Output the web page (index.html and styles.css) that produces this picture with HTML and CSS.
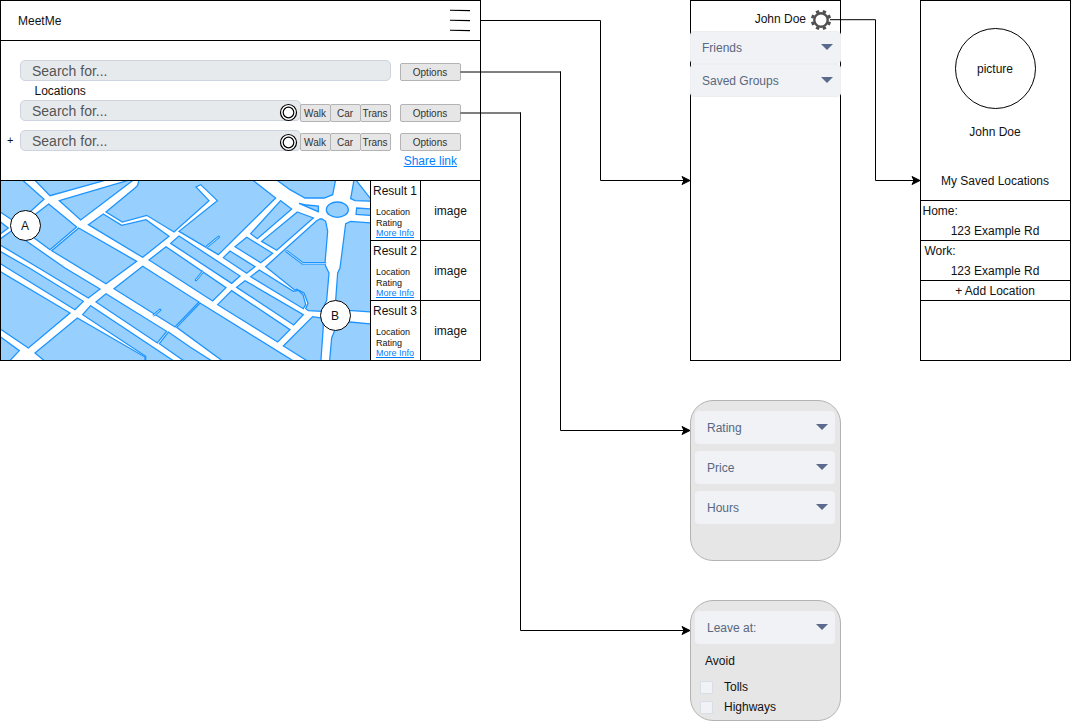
FILE: index.html
```html
<!DOCTYPE html>
<html lang="en">
<head>
<meta charset="utf-8">
<title>MeetMe</title>
<link rel="stylesheet" href="styles.css">
</head>
<body>
<main class="canvas">
  <section class="frame home">
    <header class="home-header">
      <span>MeetMe</span>
      <svg class="burger" width="22" height="24" viewBox="0 0 22 24"><path d="M1 1.3L21 1.6M1 11.3L21 11.6M1 21.3L21 21.6"/></svg>
    </header>
    <div class="form">
      <div class="row">
        <div class="search wide">Search for...</div>
        <div class="btn options">Options</div>
      </div>
      <div class="label">Locations</div>
      <div class="row tall">
        <div class="search">Search for...</div>
        <svg class="target" width="20" height="20" viewBox="0 0 20 20"><circle cx="9.5" cy="9.5" r="8"/><circle cx="9.5" cy="9.5" r="5.3"/></svg>
        <div class="modes"><div class="btn">Walk</div><div class="btn">Car</div><div class="btn">Trans</div></div>
        <div class="btn options">Options</div>
      </div>
      <div class="row last">
        <span class="plus">+</span>
        <div class="search">Search for...</div>
        <svg class="target" width="20" height="20" viewBox="0 0 20 20"><circle cx="9.5" cy="10.5" r="8"/><circle cx="9.5" cy="10.5" r="5.3"/></svg>
        <div class="modes"><div class="btn">Walk</div><div class="btn">Car</div><div class="btn">Trans</div></div>
        <div class="btn options">Options</div>
      </div>
      <div class="share"><a class="link">Share link</a></div>
    </div>
    <div class="lower">
      <svg class="map" width="369" height="179" viewBox="3 9 1107 537">
        <g class="blocks">
          <path d="M-5 -5H55L132 64L92 100L50 135L-5 98Z"/>
          <path d="M-5 127L25 150L-5 172Z"/>
          <path d="M98 0L150 53L340 0Z"/>
          <path d="M178 68L408 0L242 126Z"/>
          <path d="M146 78L230 147L150 215L100 178L85 125Z"/>
          <path d="M236 150L410 250L318 317L155 218Z"/>
          <path d="M-5 187L35 158L80 190L195 270L300 333L265 360L120 272L-5 198Z"/>
          <path d="M-5 217L88 270L250 370L225 395L22 270L-5 253Z"/>
          <path d="M-5 277L210 405L85 510L-5 449Z"/>
          <path d="M-5 472L58 518L20 558L-5 558Z"/>
          <path d="M105 525L232 420L435 537V558H145Z"/>
          <path d="M272 383L535 558H437V535L248 410Z"/>
          <path d="M318 347L500 460L472 495L288 372Z"/>
          <path d="M505 462L570 507L650 558H565L478 497Z"/>
          <path d="M428 265L597 372L525 447L342 332Z"/>
          <path d="M600 375L895 558H680L530 448Z"/>
          <path d="M265 140L310 108L365 142L438 125L507 175L428 238Z"/>
          <path d="M318 102L367 132L440 112L522 162L627 68L588 27L602 20L652 68L537 160L655 230L827 60L750 0H418L413 22L405 30Z"/>
          <path d="M537 174L720 294L695 316L512 196Z"/>
          <path d="M498 206L678 329L638 369L447 246Z"/>
          <path d="M653 380L695 338L870 455L833 492Z"/>
          <path d="M710 328L735 308L910 410L881 441Z"/>
          <path d="M752 296L778 276L880 340L895 337L909 350L917 380L910 392Z"/>
          <path d="M670 239L690 219L765 266L740 286Z"/>
          <path d="M705 206L740 178L818 226L782 254Z"/>
          <path d="M842 68L875 93L772 182L752 167Z"/>
          <path d="M892 102L940 120L830 217L785 190Z"/>
          <path d="M960 123L966 123L977 130L983 160L975 255L977 264L987 285L980 367L965 400L925 398L917 392L924 376L912 345L890 334L885 337L797 266L950 128Z"/>
          <path d="M1118 135L1052 130L1037 137L1020 270L1013 285L1007 367L1045 397L1118 402Z"/>
          <path d="M1063 0L1052 62L1065 68L1118 70Z"/>
          <path d="M822 0L870 35L915 60H973L998 50L1008 0Z"/>
          <ellipse cx="1012" cy="95" rx="33" ry="23"/>
          <path d="M897 76L920 81L955 84V101Z"/>
          <path d="M1070 90L1118 93V113L1068 109Z"/>
          <path d="M850 504L938 416L965 420L970 445L962 558H937Z"/>
          <path d="M1118 438L1050 432L1005 455L995 480L988 558H1118Z"/>
        </g>
        <path class="lane-edge" d="M622 205L656 177M608 282L588 306M462 411L480 396"/>
        <path class="lane-core" d="M620 207L655 178M610 280L589 305M460 413L479 397"/>
        <path class="lane-edge" d="M860 220L908 256H975"/>
        <path class="lane-core" d="M858 218L909 257H977"/>
      </svg>
      <div class="results">
        <div class="result"><div class="info"><b>Result 1</b><span>Location</span><span>Rating</span><a class="link">More Info</a></div><div class="thumb">image</div></div>
        <div class="result"><div class="info"><b>Result 2</b><span>Location</span><span>Rating</span><a class="link">More Info</a></div><div class="thumb">image</div></div>
        <div class="result"><div class="info"><b>Result 3</b><span>Location</span><span>Rating</span><a class="link">More Info</a></div><div class="thumb">image</div></div>
      </div>
    </div>
    <div class="pin pin-a">A</div>
    <div class="pin pin-b">B</div>
  </section>

  <section class="frame menu">
    <div class="user"><span>John Doe</span>
      <svg width="22" height="22" viewBox="-11 -11 22 22"><circle class="gear-ring" r="6.7"/><g class="gear-teeth"><path d="M7.4 0H10.2" transform="rotate(22.5)"/><path d="M7.4 0H10.2" transform="rotate(67.5)"/><path d="M7.4 0H10.2" transform="rotate(112.5)"/><path d="M7.4 0H10.2" transform="rotate(157.5)"/><path d="M7.4 0H10.2" transform="rotate(202.5)"/><path d="M7.4 0H10.2" transform="rotate(247.5)"/><path d="M7.4 0H10.2" transform="rotate(292.5)"/><path d="M7.4 0H10.2" transform="rotate(337.5)"/></g></svg>
    </div>
    <div class="drop">Friends<i class="caret"></i></div>
    <div class="drop">Saved Groups<i class="caret"></i></div>
  </section>

  <section class="frame profile">
    <div class="avatar">picture</div>
    <div class="name">John Doe</div>
    <div class="saved">My Saved Locations</div>
    <div class="place"><span>Home:</span><p>123 Example Rd</p></div>
    <div class="place work"><span>Work:</span><p>123 Example Rd</p></div>
    <div class="add">+ Add Location</div>
  </section>

  <section class="card filters">
    <div class="drop">Rating<i class="caret"></i></div>
    <div class="drop">Price<i class="caret"></i></div>
    <div class="drop">Hours<i class="caret"></i></div>
  </section>

  <section class="card travel">
    <div class="drop">Leave at:<i class="caret"></i></div>
    <div class="avoid">Avoid</div>
    <div class="check"><i class="box"></i>Tolls</div>
    <div class="check"><i class="box"></i>Highways</div>
  </section>

  <svg class="wires" width="1071" height="721" viewBox="0 0 1071 721">
    <path d="M480.5 20.5H600.5V180.5H684"/>
    <path d="M560.5 71.5V430.5H684"/>
    <path d="M520.5 112.5V630.5H684"/>
    <path d="M830 19.7H875.5V180.5H914"/>
    <path d="M460.5 72H561M460.5 113H521"/>
    <g class="heads">
      <path d="M690 180.5L682 184.5L684 180.5L682 176.5Z"/>
      <path d="M690 430.5L682 434.5L684 430.5L682 426.5Z"/>
      <path d="M690 630.5L682 634.5L684 630.5L682 626.5Z"/>
      <path d="M920 180.5L912 184.5L914 180.5L912 176.5Z"/>
    </g>
  </svg>
</main>
</body>
</html>
```
FILE: styles.css
```css
* { box-sizing: border-box; }
body { margin: 0; background: #fff; }
.canvas {
  position: relative;
  width: 1071px;
  height: 721px;
  overflow: hidden;
  font: 12px/14px "Liberation Sans", Arial, sans-serif;
  color: #111;
}
.frame, .card { position: absolute; }
.frame { top: 0; height: 361px; background: #fff; border: 1px solid #000; }
.link { color: #007fff; text-decoration: underline; }

/* Home screen */
.home { left: 0; width: 481px; }
.home-header {
  display: flex;
  justify-content: space-between;
  align-items: center;
  height: 40px;
  padding: 0 9px 0 17px;
  border-bottom: 1px solid #000;
}
.burger { fill: none; stroke: #000; stroke-width: 1.1; }
.form { height: 139px; padding: 19px 19px 0; }
.row { display: flex; height: 21px; align-items: flex-end; }
.row.tall { height: 22px; }
.row.last { margin-top: 8px; }
.search {
  align-self: flex-start;
  flex: none;
  width: 281px;
  height: 21px;
  padding-left: 11px;
  border: 1px solid #cdd3df;
  border-radius: 5px;
  background: #e7eaed;
  color: #555;
  font-size: 14px;
  line-height: 20px;
}
.search.wide { width: 371px; }
.label { height: 19px; padding: 3px 0 0 14.5px; }
.btn {
  flex: none;
  width: 31px;
  height: 18px;
  border: 1px solid #b3b3b3;
  border-radius: 2px;
  background: #e6e6e6;
  color: #333;
  font-size: 10px;
  line-height: 17px;
  text-align: center;
  text-indent: -1px;
}
.options { width: 61px; margin-left: 9px; }
.modes { display: flex; margin-left: -1px; }
.modes .btn + .btn { margin-left: -1px; }
.target { flex: none; margin: 0 2px -1px -22px; fill: #fff; stroke: #000; stroke-width: 1.2; }
.plus { width: 13px; margin-left: -13px; font-size: 11px; line-height: 20px; align-self: flex-start; }
.share { padding: 3px 4px 0; text-align: right; }
.lower { display: flex; height: 180px; border-top: 1px solid #000; }
.map { flex: none; background: #fff; }
.blocks { fill: #97d0ff; stroke: #1c93ff; stroke-width: 3.8; }
.lane-edge { fill: none; stroke: #1c93ff; stroke-width: 8; stroke-linecap: round; }
.lane-core { fill: none; stroke: #b9dfff; stroke-width: 3; stroke-linecap: round; }
.results { flex: 1; }
.result { display: flex; height: 60px; border-left: 1px solid #000; border-bottom: 1px solid #000; }
.result:last-child { border-bottom: 0; }
.info { display: flex; flex-direction: column; width: 50px; padding: 3px 0 0 5px; border-right: 1px solid #000; font-size: 9px; line-height: 11px; }
.info b { margin: 0 0 9px -3px; font-size: 12px; font-weight: normal; line-height: 14px; white-space: nowrap; }
.info .link { line-height: 11px; margin-top: -1px; }
.thumb { flex: 1; text-align: center; line-height: 60px; }
.pin {
  position: absolute;
  width: 31px;
  height: 31px;
  border: 1px solid #000;
  border-radius: 50%;
  background: #fff;
  line-height: 30px;
  text-align: center;
  text-indent: -1px;
}
.pin-a { left: 9px; top: 209px; }
.pin-b { left: 319px; top: 299px; }

/* Side menu */
.menu { left: 690px; width: 151px; }
.user { display: flex; justify-content: flex-end; align-items: center; gap: 4px; height: 30px; padding: 7px 8px 0 0; }
.user span { padding-bottom: 1px; }
.gear-ring { fill: none; stroke: #505050; stroke-width: 2.4; }
.gear-teeth { stroke: #505050; stroke-width: 3.4; }
.drop {
  display: flex;
  justify-content: space-between;
  align-items: center;
  height: 33px;
  padding: 0 8px 0 12px;
  border-radius: 4px;
  background: #f0f2f5;
  color: #596780;
}
.menu .drop { margin: 0 -1px; border: 1px solid #eceef1; padding: 0 7px 0 11px; }
.caret { margin-bottom: 1px; border: 6.5px solid transparent; border-top-color: #596a8d; border-bottom: 0; }

/* Profile */
.profile { left: 920px; width: 151px; text-align: center; }
.avatar { width: 81px; height: 81px; margin: 27px auto 0; border: 1px solid #000; border-radius: 50%; line-height: 80px; text-indent: -1px; }
.name { margin-top: 16px; text-indent: -1px; }
.saved { height: 26px; margin-top: 35px; text-indent: -1px; }
.place { height: 40px; padding-top: 3px; border-top: 1px solid #000; }
.place span { display: block; padding-left: 1.5px; text-align: left; line-height: 14px; }
.work span { padding-left: 3.5px; }
.place p { margin: 3px 0 0; line-height: 20px; text-indent: -1px; }
.add { height: 21px; border: solid #000; border-width: 1px 0; line-height: 20px; text-indent: -1px; }

/* Option cards */
.card { left: 690px; width: 151px; padding: 10px 5px; border: 1px solid #b3b3b3; border-radius: 23px; background: #e6e6e6; }
.card .drop { margin: 0 0 0 -1px; padding: 0 7px 0 12px; }
.filters { top: 400px; height: 161px; }
.filters .drop + .drop { margin-top: 7px; }
.travel { top: 600px; height: 121px; }
.avoid { margin: 10px 0 9px 9px; }
.check { display: flex; align-items: center; gap: 11px; height: 20px; padding-left: 4px; }
.box { width: 13px; height: 13px; border: 1px solid #d8dde6; border-radius: 1px; background: #f0f2f5; }

.wires { position: absolute; left: 0; top: 0; fill: none; stroke: #000; }
.heads { fill: #000; stroke-linejoin: miter; stroke-width: 1; }
```
